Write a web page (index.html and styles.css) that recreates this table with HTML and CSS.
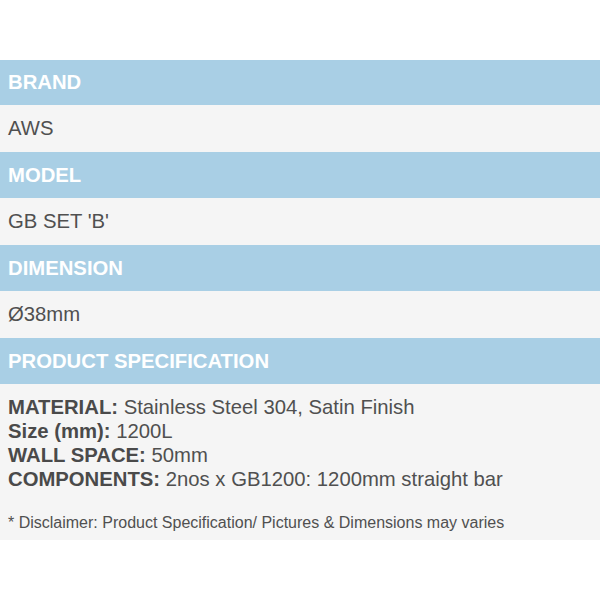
FILE: index.html
```html
<!DOCTYPE html>
<html>
<head>
<meta charset="utf-8">
<link rel="stylesheet" href="styles.css">
</head>
<body>
<div class="table">
  <div class="head h1">BRAND</div>
  <div class="cell r1">AWS</div>
  <div class="head h2">MODEL</div>
  <div class="cell r2">GB SET 'B'</div>
  <div class="head h3">DIMENSION</div>
  <div class="cell r3">Ø38mm</div>
  <div class="head h4">PRODUCT SPECIFICATION</div>
  <div class="spec">
    <div class="lines">
      <div><b>MATERIAL:</b> Stainless Steel 304, Satin Finish</div>
      <div><b>Size (mm):</b> 1200L</div>
      <div><b>WALL SPACE:</b> 50mm</div>
      <div><b>COMPONENTS:</b> 2nos x GB1200: 1200mm straight bar</div>
    </div>
    <div class="note">* Disclaimer: Product Specification/ Pictures &amp; Dimensions may varies</div>
  </div>
</div>
</body>
</html>
```
FILE: styles.css
```css
html, body {
  margin: 0;
  padding: 0;
  background: #ffffff;
}
body {
  font-family: "Liberation Sans", Arial, sans-serif;
  color: #505050;
}
.table {
  margin-top: 60px;
  display: flex;
  flex-direction: column;
}
.head, .cell {
  display: flex;
  align-items: center;
  padding-left: 8px;
  font-size: 20.3px;
}
.head {
  background: #a9cfe5;
  color: #ffffff;
  font-weight: bold;
}
.cell {
  background: #f5f5f5;
}
.h1 { height: 45px; }
.r1 { height: 47px; }
.h2 { height: 46px; }
.r2 { height: 47px; }
.h3 { height: 46px; }
.r3 { height: 47px; }
.h4 { height: 46px; }
.spec {
  background: #f5f5f5;
  padding: 11px 8px 7px 8px;
  height: 138px;
}
.lines {
  font-size: 20.3px;
  line-height: 24px;
}
.lines b {
  font-weight: bold;
  color: #4a4a4a;
}
.note {
  margin-top: 22px;
  font-size: 16px;
  line-height: 20px;
}
```
